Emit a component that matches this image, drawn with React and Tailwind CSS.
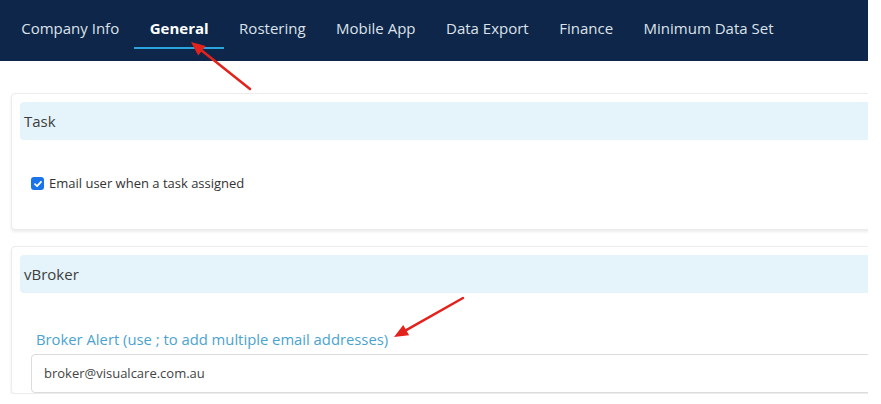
import React from 'react';

const tabs = ['Company Info', 'General', 'Rostering', 'Mobile App', 'Data Export', 'Finance', 'Minimum Data Set'];

const font = { fontFamily: '"Open Sans", "Noto Sans", sans-serif' };

const Arrow = ({ x1, y1, x2, y2 }) => {
  // shaft from tail (x1,y1) to tip (x2,y2) with a filled head
  const a = Math.atan2(y2 - y1, x2 - x1);
  const len = 14;
  const w = 6;
  const bx = x2 - len * Math.cos(a);
  const by = y2 - len * Math.sin(a);
  const px = -Math.sin(a) * w;
  const py = Math.cos(a) * w;
  return (
    <g>
      <line x1={x1} y1={y1} x2={bx} y2={by} stroke="#e3221c" strokeWidth="2.5" strokeLinecap="round" />
      <polygon points={`${x2},${y2} ${bx + px},${by + py} ${bx - px},${by - py}`} fill="#e3221c" />
    </g>
  );
};

const Card = ({ title, children }) => (
  <div className="w-[875px] rounded border border-[#ececec] bg-white px-2 pt-2 shadow-[0_2px_3px_rgba(0,0,0,0.08)]">
    <div className="flex h-[38px] items-center rounded bg-[#e5f4fa] px-[4px] text-[15px] text-[#3d3d3d]">{title}</div>
    {children}
  </div>
);

export default function App() {
  return (
    <div className="relative h-[404px] w-[881px] overflow-hidden bg-white" style={font}>
      <div className="w-[868px] overflow-hidden">
        <nav className="flex h-[61px] items-stretch bg-[#0d2649] pl-[6px]">
          {tabs.map((t) => {
            const active = t === 'General';
            return (
              <div key={t} className="relative flex items-center px-[15.25px] pb-[4px]">
                <span className={active ? 'text-[15px] font-bold text-white' : 'text-[15px] text-[#dde2ea]'}>{t}</span>
                {active && <div className="absolute bottom-[12px] left-0 right-0 h-[2px] bg-[#2aa4dc]" />}
              </div>
            );
          })}
        </nav>

        <div className="flex flex-col gap-[16px] pl-[11px] pt-[32px]">
          <Card title="Task">
            <div className="flex h-[89px] items-center pl-[11px] pb-[2px]">
              <div className="flex h-[13px] w-[13px] items-center justify-center rounded-[3px] bg-[#1a73e8]">
                <svg width="10" height="10" viewBox="0 0 10 10">
                  <path d="M2 5.2 L4.1 7.2 L8 2.8" fill="none" stroke="white" strokeWidth="1.8" strokeLinecap="round" strokeLinejoin="round" />
                </svg>
              </div>
              <span className="ml-[5px] text-[13px] text-[#333]">Email user when a task assigned</span>
            </div>
          </Card>

          <Card title="vBroker">
            <div className="pl-[11px] pt-[36px]">
              <div className="ml-[5px] text-[14.8px] leading-[20px] text-[#4ba3cf]">Broker Alert (use ; to add multiple email addresses)</div>
              <div className="mt-[5px] flex h-[39px] items-center rounded border border-[#dcdcdc] pl-[12px] text-[13px] text-[#444]">
                broker@visualcare.com.au
              </div>
            </div>
          </Card>
        </div>
      </div>

      <svg className="pointer-events-none absolute left-0 top-0" width="881" height="404">
        <Arrow x1={250} y1={89} x2={191} y2={42} />
        <Arrow x1={463} y1={298} x2={394} y2={337} />
      </svg>
    </div>
  );
}
